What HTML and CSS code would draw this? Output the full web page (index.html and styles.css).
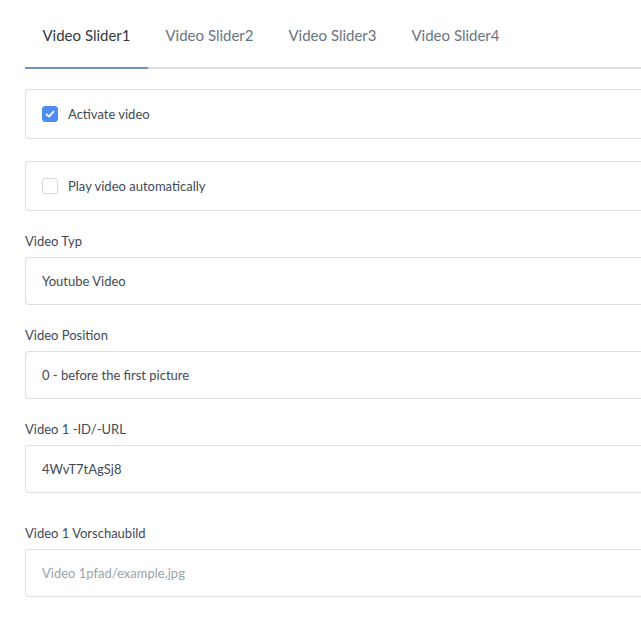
FILE: index.html
```html
<!DOCTYPE html>
<html>
<head>
<meta charset="utf-8">
<link rel="stylesheet" href="styles.css">
</head>
<body>
<div class="page">
  <div class="tabs">
    <div class="tab active">Video Slider1</div>
    <div class="tab">Video Slider2</div>
    <div class="tab">Video Slider3</div>
    <div class="tab">Video Slider4</div>
  </div>
  <div class="check-box">
    <span class="cb checked"><svg viewBox="0 0 16 16" width="16" height="16"><path d="M4.5 8.3 L7 10.6 L11.6 5.6" fill="none" stroke="#fff" stroke-width="1.8" stroke-linecap="round" stroke-linejoin="round"/></svg></span>
    <span class="cb-label">Activate video</span>
  </div>
  <div class="check-box second">
    <span class="cb"></span>
    <span class="cb-label">Play video automatically</span>
  </div>
  <div class="field">
    <div class="label">Video Typ</div>
    <div class="input">Youtube Video</div>
  </div>
  <div class="field">
    <div class="label">Video Position</div>
    <div class="input">0 - before the first picture</div>
  </div>
  <div class="field">
    <div class="label">Video 1 -ID/-URL</div>
    <div class="input">4WvT7tAgSj8</div>
  </div>
  <div class="field last">
    <div class="label">Video 1 Vorschaubild</div>
    <div class="input placeholder">Video 1pfad/example.jpg</div>
  </div>
</div>
</body>
</html>
```
FILE: styles.css
```css
html, body {
  margin: 0;
  padding: 0;
  background: #fff;
}
.page {
  box-sizing: border-box;
  width: 100%;
  padding-left: 25px;
  font-family: "Lato", "Liberation Sans", sans-serif;
  color: #424a57;
}
.tabs {
  display: flex;
  border-bottom: 2px solid #dcdfe3;
  height: 67px;
}
.tab {
  width: 123px;
  box-sizing: border-box;
  display: flex;
  align-items: center;
  justify-content: center;
  padding-top: 2px;
  font-size: 15px;
  color: #6b7480;
  margin-bottom: -2px;
  border-bottom: 2px solid transparent;
}
.tab.active {
  color: #333a45;
  border-bottom-color: #7093bd;
}
.check-box {
  margin-top: 20px;
  height: 50px;
  box-sizing: border-box;
  border: 1px solid #dcdfe3;
  border-right: none;
  border-radius: 4px 0 0 4px;
  display: flex;
  align-items: center;
  padding-left: 16px;
}
.check-box.second {
  margin-top: 22px;
}
.cb {
  width: 16px;
  height: 16px;
  box-sizing: border-box;
  border: 1px solid #d4d8dd;
  border-radius: 3px;
  display: flex;
  background: #fff;
}
.cb.checked {
  background: #4d8df0;
  border-color: #4d8df0;
}
.cb.checked svg {
  margin: -1px;
}
.cb-label {
  margin-left: 10px;
  font-size: 13px;
  color: #424a57;
}
.field {
  margin-top: 22px;
}
.field.last {
  margin-top: 32px;
}
.label {
  font-size: 13px;
  line-height: 16px;
  color: #424a57;
  margin-bottom: 8px;
}
.input {
  height: 48px;
  box-sizing: border-box;
  border: 1px solid #dcdfe3;
  border-right: none;
  border-radius: 4px 0 0 4px;
  display: flex;
  align-items: center;
  padding-left: 16px;
  font-size: 13px;
  color: #424a57;
}
.input.placeholder {
  color: #9aa3ad;
}
```
